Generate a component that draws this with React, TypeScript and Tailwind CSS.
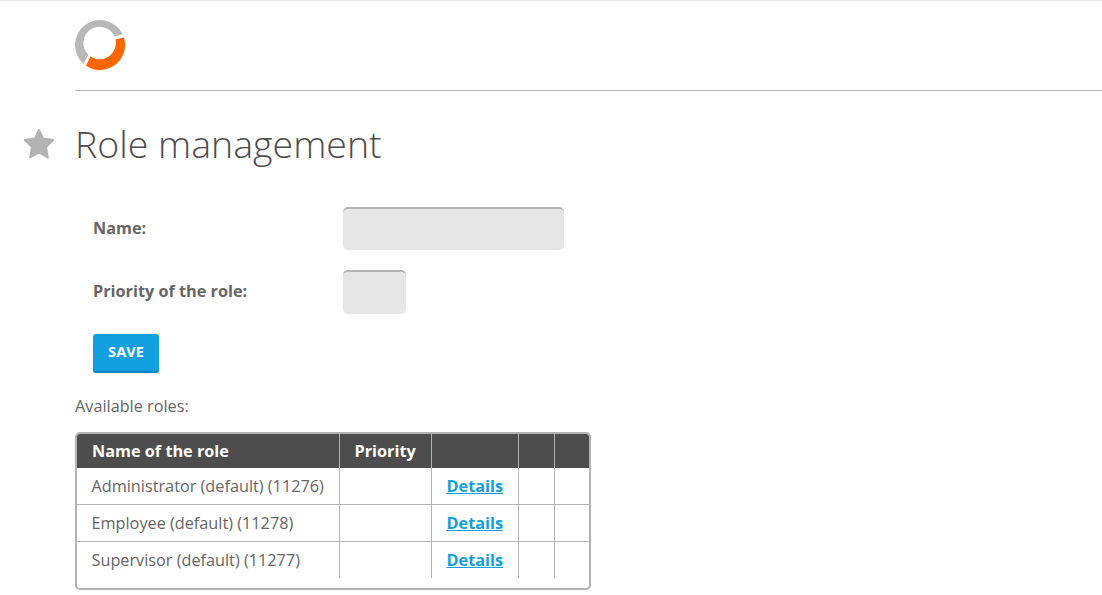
const roles = [
  'Administrator (default) (11276)',
  'Employee (default) (11278)',
  'Supervisor (default) (11277)',
]

function Logo() {
  return (
    <svg width="50" height="50" viewBox="0 0 50 50" className="block">
      <path d="M47.6 14.3 A25 25 0 1 0 8.5 43.8 L13.5 35 A16.3 16.3 0 1 1 39.6 16.6 Z" fill="#b8b8b8" />
      <path d="M48.9 17.6 A25 25 0 0 1 11 45.7 L15.5 36.6 A16.3 16.3 0 0 0 40.4 19.4 Z" fill="#ff6600" />
    </svg>
  )
}

function Star() {
  return (
    <svg width="32" height="33" viewBox="0 0 32 33" className="block">
      <path
        d="M16 2 L20.2 10.6 L30.2 12 L23 19 L24.8 29.5 L16 24.5 L7.2 29.5 L9 19 L1.8 12 L11.8 10.6 Z"
        fill="#b3b3b3"
        stroke="#b3b3b3"
        strokeWidth="2"
        strokeLinejoin="round"
      />
    </svg>
  )
}

export default function App() {
  return (
    <div className="min-h-[595px] border-t border-[#e6e6e6] bg-white font-['Open_Sans',sans-serif] text-[16.25px] text-[#666666]">
      <header className="ml-[75px] h-[90px] border-b border-[#b3b3b3] pt-[19px]">
        <Logo />
      </header>

      <div className="mt-[28px] flex h-[50px] items-center">
        <div className="w-[75px] pl-[23px]">
          <Star />
        </div>
        <h1 className="text-[37.5px] leading-[50px] font-light text-[#4d4d4d]">Role management</h1>
      </div>

      <div className="mt-[38px] ml-[93px]">
        <div className="flex items-center">
          <label className="w-[250px] font-bold">Name:</label>
          <input className="h-[43px] w-[221px] rounded-[5px] border-t-2 border-[#b3b3b3] bg-[#e6e6e6]" />
        </div>
        <div className="mt-[20px] flex items-center">
          <label className="w-[250px] pb-[2px] font-bold">Priority of the role:</label>
          <input className="h-[44px] w-[63px] rounded-[5px] border-t-2 border-[#b3b3b3] bg-[#e6e6e6]" />
        </div>
        <button className="mt-[20px] block h-[39px] w-[66px] rounded-[3px] border-b-2 border-[#0f7fbc] bg-[#129fe0] pb-[1px] text-[14.6px] font-bold text-white">
          SAVE
        </button>
      </div>

      <p className="mt-[22px] ml-[75px] leading-[22px]">Available roles:</p>

      <div className="mt-[15px] ml-[75px] w-[516px] overflow-hidden rounded-[5px] border-2 border-[#b3b3b3] pb-[10px]">
        <table className="w-[512px] table-fixed border-collapse">
          <thead>
            <tr className="h-[34px] bg-[#4d4d4d] text-left font-bold text-white">
              <th className="w-[262px] pl-[15px]">Name of the role</th>
              <th className="w-[92px] border-l border-[#b3b3b3] pl-[15px]">Priority</th>
              <th className="w-[87px] border-l border-[#b3b3b3]" />
              <th className="w-[36px] border-l border-[#b3b3b3]" />
              <th className="border-l border-[#b3b3b3]" />
            </tr>
          </thead>
          <tbody>
            {roles.map((role, i) => (
              <tr
                key={role}
                className={i === 0 ? 'h-[36px] border-b border-[#b3b3b3]' : i === 1 ? 'h-[37px] border-b border-[#b3b3b3]' : 'h-[37px]'}
              >
                <td className={i === 1 ? 'pt-[2px] pl-[14.5px]' : 'pl-[14.5px]'}>{role}</td>
                <td className="border-l border-[#b3b3b3]" />
                <td className={i === 1 ? 'border-l border-[#b3b3b3] pt-[2px] pl-[15px]' : 'border-l border-[#b3b3b3] pl-[15px]'}>
                  <a href="#" className="font-bold text-[#129fe0] underline">Details</a>
                </td>
                <td className="border-l border-[#b3b3b3]" />
                <td className="border-l border-[#b3b3b3]" />
              </tr>
            ))}
          </tbody>
        </table>
      </div>
    </div>
  )
}
